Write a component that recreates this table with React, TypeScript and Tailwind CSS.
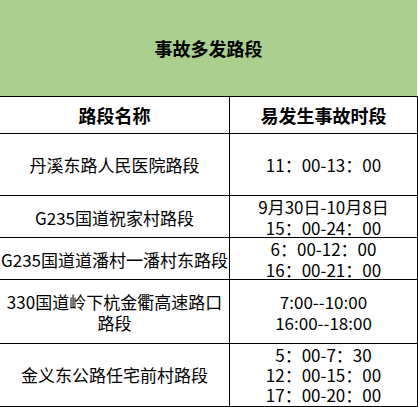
const ROWS: { name: React.ReactNode; times: string[]; h: string; leading: string }[] = [
  { name: "丹溪东路人民医院路段", times: ["11：00-13：00"], h: "h-[62px]", leading: "leading-[22px]" },
  { name: "G235国道祝家村路段", times: ["9月30日-10月8日", "15：00-24：00"], h: "h-[42px]", leading: "leading-[21px]" },
  { name: "G235国道道潘村一潘村东路段", times: ["6：00-12：00", "16：00-21：00"], h: "h-[42px]", leading: "leading-[21px]" },
  {
    name: (
      <>
        330国道岭下杭金衢高速路口
        <br />
        路段
      </>
    ),
    times: ["7:00--10:00", "16:00--18:00"],
    h: "h-[64px]",
    leading: "leading-[21px]",
  },
  { name: "金义东公路任宅前村路段", times: ["5：00-7：30", "12：00-15：00", "17：00-20：00"], h: "h-[63px]", leading: "leading-[20px]" },
];

export default function App() {
  return (
    <div
      className="w-[418px] h-[407px] overflow-hidden bg-white text-black"
      style={{ fontFamily: '"Noto Sans CJK SC", "Noto Sans", sans-serif' }}
    >
      {/* Title */}
      <div className="h-[96px] w-[417px] bg-[#a9d08e] flex items-center justify-center">
        <span className="text-[18px] font-bold">事故多发路段</span>
      </div>

      {/* Table */}
      <div className="border-t border-r border-black">
        <div className="grid grid-cols-[230px_1fr] h-[37px] border-b border-black">
          <div className="border-r border-black flex items-center justify-center text-[18px] font-bold">
            路段名称
          </div>
          <div className="flex items-center justify-center text-[18px] font-bold">易发生事故时段</div>
        </div>

        {ROWS.map((row, i) => (
          <div key={i} className={`grid grid-cols-[230px_1fr] border-b border-black ${row.h}`}>
            <div
              className={`border-r border-black flex items-center justify-center text-center text-[17px] ${row.leading}`}
            >
              <span>{row.name}</span>
            </div>
            <div className={`flex flex-col items-center justify-center text-[17px] ${row.leading}`}>
              {row.times.map((t) => (
                <span key={t} className="whitespace-nowrap">
                  {t}
                </span>
              ))}
            </div>
          </div>
        ))}
      </div>
    </div>
  );
}
